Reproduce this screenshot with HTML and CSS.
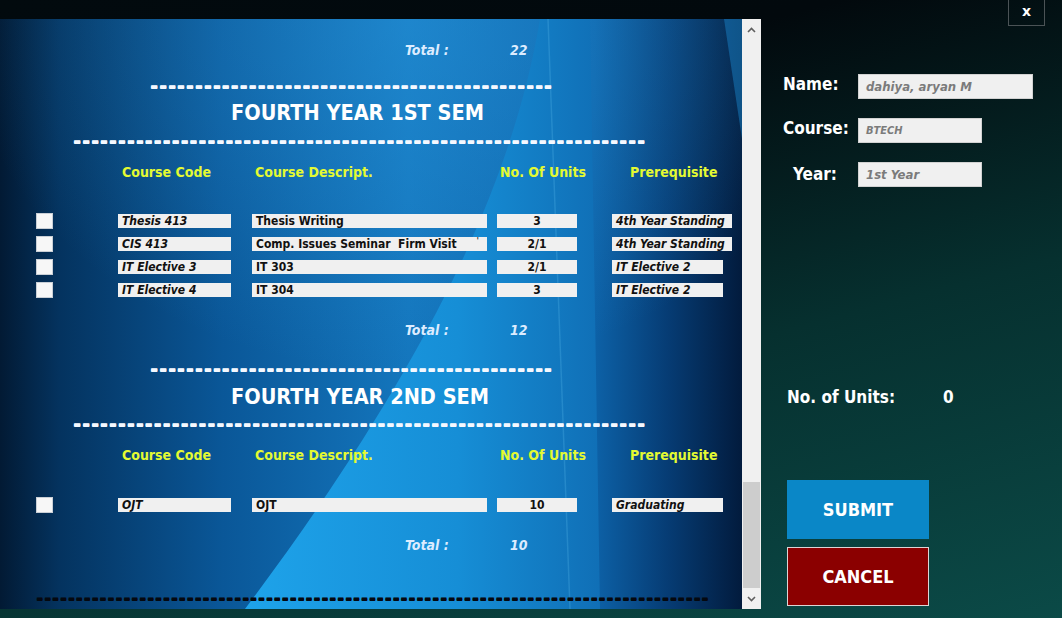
FILE: index.html
```html
<!DOCTYPE html>
<html lang="en">
<head>
<meta charset="utf-8">
<title>Enrollment - Subjects</title>
<link rel="stylesheet" href="styles.css">
</head>
<body>
<div class="app">
  <section class="list-wrap">
    <div class="list">
      <div class="total"><span class="total-label">Total :</span><span class="total-val">22</span></div>
      <div class="dash dash-short">---------------------------------------------</div>
      <h2 class="sem-title">FOURTH YEAR 1ST SEM</h2>
      <div class="dash dash-long">----------------------------------------------------------------</div>
      <div class="head-row">
        <span class="h h-code">Course Code</span>
        <span class="h h-desc">Course Descript.</span>
        <span class="h h-units">No. Of Units</span>
        <span class="h h-pre">Prerequisite</span>
      </div>
      <div class="rows">
        <div class="row"><span class="cb"></span><span class="f code">Thesis 413</span><span class="f desc">Thesis Writing</span><span class="f units">3</span><span class="f pre wide">4th Year Standing</span></div>
        <div class="row"><span class="cb"></span><span class="f code">CIS 413</span><span class="f desc"><span>Comp. Issues Seminar  Firm Visit</span><span class="tick">'</span></span><span class="f units">2/1</span><span class="f pre wide">4th Year Standing</span></div>
        <div class="row"><span class="cb"></span><span class="f code">IT Elective 3</span><span class="f desc">IT 303</span><span class="f units">2/1</span><span class="f pre">IT Elective 2</span></div>
        <div class="row"><span class="cb"></span><span class="f code">IT Elective 4</span><span class="f desc">IT 304</span><span class="f units">3</span><span class="f pre">IT Elective 2</span></div>
      </div>
      <div class="total t2"><span class="total-label">Total :</span><span class="total-val">12</span></div>
      <div class="dash dash-short d3">---------------------------------------------</div>
      <h2 class="sem-title t2">FOURTH YEAR 2ND SEM</h2>
      <div class="dash dash-long d4">----------------------------------------------------------------</div>
      <div class="head-row">
        <span class="h h-code">Course Code</span>
        <span class="h h-desc">Course Descript.</span>
        <span class="h h-units">No. Of Units</span>
        <span class="h h-pre">Prerequisite</span>
      </div>
      <div class="rows r2">
        <div class="row"><span class="cb"></span><span class="f code">OJT</span><span class="f desc">OJT</span><span class="f units">10</span><span class="f pre">Graduating</span></div>
      </div>
      <div class="total t3"><span class="total-label">Total :</span><span class="total-val">10</span></div>
      <div class="dash dash-dark">-------------------------------------------------------------------------------------</div>
    </div>
    <div class="scrollbar">
      <span class="arrow"><svg width="9" height="6" viewBox="0 0 9 6"><polyline points="1,5 4.5,1.5 8,5" fill="none" stroke="#5f5f5f" stroke-width="1.6"/></svg></span>
      <span class="track"><span class="thumb"></span></span>
      <span class="arrow"><svg width="9" height="6" viewBox="0 0 9 6"><polyline points="1,1 4.5,4.5 8,1" fill="none" stroke="#5f5f5f" stroke-width="1.6"/></svg></span>
    </div>
  </section>
  <aside class="side">
    <div class="close-row"><button class="close">x</button></div>
    <div class="form">
      <div class="field-row"><span class="lbl">Name:</span><span class="input in-name">dahiya, aryan M</span></div>
      <div class="field-row"><span class="lbl">Course:</span><span class="input in-short in-course">BTECH</span></div>
      <div class="field-row year"><span class="lbl">Year:</span><span class="input in-short">1st Year</span></div>
    </div>
    <div class="units-row"><span class="units-lbl">No. of Units:</span><span class="units-val">0</span></div>
    <div class="buttons">
      <button class="btn submit">SUBMIT</button>
      <button class="btn cancel">CANCEL</button>
    </div>
  </aside>
</div>
</body>
</html>
```
FILE: styles.css
```css
* { box-sizing: border-box; }
html, body { margin: 0; padding: 0; }
body {
  width: 1062px;
  height: 618px;
  overflow: hidden;
  background: linear-gradient(165deg, #020a0e 0%, #02090d 25%, #06302f 60%, #0b4a47 100%);
  font-family: "DejaVu Sans Condensed", "DejaVu Sans", sans-serif;
  font-weight: bold;
  color: #fff;
}
.app { display: flex; height: 618px; }

/* ---------- left scroll list ---------- */
.list-wrap { display: flex; margin-top: 19px; height: 590px; }
.list {
  width: 742px;
  height: 590px;
  overflow: hidden;
  padding-top: 19px;
  background-color: #0a5798;
  background-image: url("data:image/svg+xml,<svg xmlns='http://www.w3.org/2000/svg' width='742' height='590' viewBox='0 0 742 590'><defs><linearGradient id='a' x1='0' x2='1' y1='0' y2='0'><stop offset='0' stop-color='%23021a34'/><stop offset='0.08' stop-color='%2304335f'/><stop offset='0.3' stop-color='%230a5798'/><stop offset='0.55' stop-color='%231476bd'/><stop offset='0.8' stop-color='%230d62a8'/><stop offset='0.9' stop-color='%23063c74'/><stop offset='1' stop-color='%23021b3d'/></linearGradient><linearGradient id='b' x1='0' x2='1' y1='0' y2='0'><stop offset='0' stop-color='%231ea3ea'/><stop offset='0.6' stop-color='%23168ed6'/><stop offset='1' stop-color='%23106fb6'/></linearGradient><radialGradient id='g' cx='0.55' cy='0' r='0.6'><stop offset='0' stop-color='%232a9ae0' stop-opacity='0.45'/><stop offset='1' stop-color='%232a9ae0' stop-opacity='0'/></radialGradient></defs><rect width='742' height='590' fill='url(%23a)'/><rect width='742' height='590' fill='url(%23g)'/><path d='M540 0 C 515 150 440 330 245 590 L 600 590 L 590 0 Z' fill='url(%23b)'/><path d='M548 0 L 570 590' stroke='%2360c0f0' stroke-opacity='0.25' stroke-width='1.5' fill='none'/><path d='M724 0 L 742 0 L 742 120 Z' fill='%231a8ad0' fill-opacity='0.45'/></svg>");
  background-repeat: no-repeat;
}

.total { display: flex; height: 24px; align-items: center; padding-left: 405px; font-style: italic; font-size: 14px; color: #dcecff; }
.total-label { width: 105px; }
.total.t2 { margin-top: 20px; }
.total.t3 { margin-top: 20px; }

.dash {
  font-family: "DejaVu Sans", sans-serif;
  font-weight: bold;
  font-size: 20px;
  letter-spacing: 0.65px;
  line-height: 14px;
  height: 14px;
  white-space: nowrap;
  color: #f4f8ff;
  text-shadow: 0 0.7px 0 currentColor;
}
.dash-short { margin-top: 16px; margin-left: 150px; }
.dash-long { margin-top: 7px; margin-left: 73px; }
.dash.d3 { margin-top: 19px; }
.dash.d4 { margin-top: 6px; }
.dash-dark { margin-top: 34px; margin-left: 36px; color: #05080f; font-size: 18px; letter-spacing: 0.45px; }

.sem-title {
  margin: 8px 0 0 231px;
  height: 26px;
  line-height: 26px;
  font-size: 21.5px;
  font-weight: bold;
  color: #fff;
}
.sem-title.t2 { margin-top: 9px; }

.head-row { display: flex; height: 20px; align-items: center; margin-top: 15px; font-size: 14px; color: #e4fa32; }
.h-code { margin-left: 122px; width: 133px; }
.h-desc { width: 245px; }
.h-units { width: 130px; }

.rows { margin-top: 31px; display: flex; flex-direction: column; gap: 7px; }
.rows.r2 { margin-top: 32px; }
.row { display: flex; align-items: center; height: 16px; }
.cb { width: 17px; height: 16px; margin-left: 36px; background: #f7f7f7; border: 1px solid #c9cfd6; }
.f {
  height: 14px;
  line-height: 14px;
  background: #f0f0f0;
  color: #111;
  font-size: 12px;
  padding-left: 4px;
  white-space: pre;
  overflow: hidden;
}
.code { margin-left: 65px; width: 113px; font-style: italic; }
.desc { margin-left: 21px; width: 235px; display: flex; justify-content: space-between; }
.tick { font-size: 9px; line-height: 8px; padding-right: 8px; color: #333; }
.units { margin-left: 10px; width: 80px; text-align: center; padding-left: 0; }
.pre { margin-left: 35px; width: 111px; font-style: italic; }
.pre.wide { width: 120px; }

.scrollbar { width: 19px; height: 590px; background: #f0f0f0; display: flex; flex-direction: column; }
.arrow { height: 21px; display: flex; align-items: center; justify-content: center; }
.track { flex: 1; display: flex; flex-direction: column; justify-content: flex-end; }
.thumb { height: 106px; width: 17px; margin-left: 1px; background: #cdcdcd; }

/* ---------- right side ---------- */
.side { flex: 1; display: flex; flex-direction: column; padding-left: 22px; }
.close-row { display: flex; justify-content: flex-end; padding-right: 17px; }
.close {
  width: 37px; height: 27px; margin-top: -1px;
  background: transparent;
  border: 1px solid #4b5356;
  color: #fff;
  font-family: "DejaVu Sans", sans-serif;
  font-weight: bold;
  font-size: 14px;
  padding: 0 0 3px 0;
}
.form { margin-top: 48px; display: flex; flex-direction: column; gap: 19px; }
.field-row { display: flex; align-items: center; height: 25px; }
.lbl { flex: 0 0 75px; width: 75px; font-size: 17px; line-height: 20px; white-space: nowrap; padding-bottom: 6px; }
.year .lbl { padding-left: 10px; padding-bottom: 2px; }
.input {
  flex: 0 0 auto;
  height: 25px;
  background: #f0f0f0;
  border: 1px solid #d2d2d2;
  color: #7b7b7b;
  font-style: italic;
  font-size: 13px;
  padding-left: 7px;
  display: flex;
  align-items: center;
}
.in-name { width: 175px; }
.in-short { width: 124px; }
.in-course { font-size: 11px; }

.units-row { display: flex; align-items: center; height: 20px; margin-top: 200px; padding-left: 4px; font-size: 17px; }
.units-lbl { width: 156px; }

.buttons { margin-top: 73px; display: flex; flex-direction: column; gap: 8px; padding-left: 4px; }
.btn {
  width: 142px; height: 59px;
  border: none;
  color: #fff;
  font-family: "DejaVu Sans Condensed", "DejaVu Sans", sans-serif;
  font-weight: bold;
  font-size: 18px;
  display: flex; align-items: center; justify-content: center;
}
.submit { background: #0a87c7; }
.cancel { background: #8b0000; border: 1px solid #ddd5d5; }
```
